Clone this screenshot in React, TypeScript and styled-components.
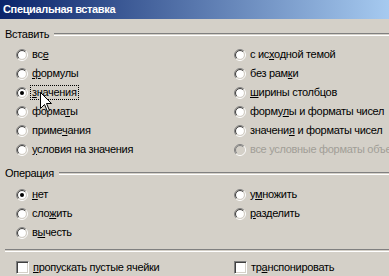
import React from "react";
import styled, { createGlobalStyle } from "styled-components";

const GlobalStyle = createGlobalStyle`
  html, body {
    margin: 0;
    padding: 0;
    background: #d4d0c8;
  }
`;

type Option = {
  text: string;
  hot: number;
  checked?: boolean;
  disabled?: boolean;
  focused?: boolean;
};

const pasteOptions: Option[] = [
  { text: "все", hot: 2 },
  { text: "формулы", hot: 0 },
  { text: "значения", hot: 0, checked: true, focused: true },
  { text: "форматы", hot: 5 },
  { text: "примечания", hot: 5 },
  { text: "условия на значения", hot: 0 },
  { text: "с исходной темой", hot: 4 },
  { text: "без рамки", hot: 7 },
  { text: "ширины столбцов", hot: 0 },
  { text: "формулы и форматы чисел", hot: 5 },
  { text: "значения и форматы чисел", hot: 7 },
  { text: "все условные форматы объединения", hot: -1, disabled: true },
];

const operationOptions: Option[] = [
  { text: "нет", hot: 0, checked: true },
  { text: "сложить", hot: 3 },
  { text: "вычесть", hot: 1 },
  { text: "умножить", hot: 1 },
  { text: "разделить", hot: 0 },
];

const Window = styled.div`
  position: relative;
  width: 389px;
  height: 276px;
  overflow: hidden;
  background: #d4d0c8;
  font-family: "Liberation Sans", Arial, sans-serif;
  font-size: 11px;
  letter-spacing: -0.3px;
  color: #000;
`;

const TitleBar = styled.div`
  height: 19px;
  padding-left: 3px;
  background: linear-gradient(90deg, #0a246a 0%, #a6caf0 100%);
  color: #fff;
  font-weight: bold;
  letter-spacing: -0.35px;
  line-height: 19px;
  white-space: nowrap;
`;

const Body = styled.div`
  display: flex;
  flex-direction: column;
  padding-left: 5px;
`;

const GroupHeader = styled.div<{ $top: number }>`
  display: flex;
  align-items: center;
  gap: 5px;
  height: 14px;
  margin-top: ${({ $top }) => $top}px;
  white-space: nowrap;
`;

const EtchedLine = styled.div`
  flex: 1;
  height: 1px;
  border-top: 1px solid #808080;
  border-bottom: 1px solid #ffffff;
`;

const Separator = styled(EtchedLine)`
  flex: none;
  margin-top: 7px;
`;

const OptionGrid = styled.div<{ $rows: number; $top: number }>`
  display: grid;
  grid-template-columns: 218px 1fr;
  grid-template-rows: repeat(${({ $rows }) => $rows}, 19px);
  grid-auto-flow: column;
  margin-top: ${({ $top }) => $top}px;
  padding-left: 11px;
`;

const CheckGrid = styled.div`
  display: grid;
  grid-template-columns: 218px 1fr;
  height: 19px;
  margin-top: 6px;
  padding-left: 11px;
`;

const Row = styled.div<{ $disabled?: boolean }>`
  display: flex;
  align-items: center;
  gap: 2px;
  white-space: nowrap;
  color: ${({ $disabled }) => ($disabled ? "#a19e97" : "#000")};
`;

const Label = styled.span<{ $focused?: boolean }>`
  padding: 0 1px;
  line-height: 13px;
  border: 1px ${({ $focused }) => ($focused ? "dotted #000" : "solid transparent")};
`;

const Hot = styled.span`
  text-decoration: underline;
`;

const CheckBox = styled.span`
  display: block;
  box-sizing: border-box;
  width: 13px;
  height: 13px;
  background: #fff;
  border: 1px solid;
  border-color: #808080 #ffffff #ffffff #808080;
  box-shadow: inset 1px 1px 0 #404040, inset -1px -1px 0 #d4d0c8;
`;

const Cursor = styled.svg`
  position: absolute;
  left: 40px;
  top: 92px;
`;

const arc = (r: number) => {
  const d = r * 0.7071;
  return {
    tl: `M ${6 - d} ${6 + d} A ${r} ${r} 0 0 1 ${6 + d} ${6 - d}`,
    br: `M ${6 + d} ${6 - d} A ${r} ${r} 0 0 1 ${6 - d} ${6 + d}`,
  };
};

const Radio = ({ checked, disabled }: { checked?: boolean; disabled?: boolean }) => {
  const outer = arc(5.5);
  const inner = arc(4.5);
  return (
    <svg width="12" height="12" viewBox="0 0 12 12">
      <circle cx="6" cy="6" r="4" fill={disabled ? "#d4d0c8" : "#fff"} />
      <path d={outer.tl} stroke="#808080" fill="none" />
      <path d={inner.tl} stroke={disabled ? "#808080" : "#404040"} fill="none" />
      <path d={outer.br} stroke="#fff" fill="none" />
      <path d={inner.br} stroke="#d4d0c8" fill="none" />
      {checked && <circle cx="6" cy="6" r="2" fill="#000" />}
    </svg>
  );
};

const Text = ({ text, hot }: { text: string; hot: number }) =>
  hot < 0 ? (
    <>{text}</>
  ) : (
    <>
      {text.slice(0, hot)}
      <Hot>{text[hot]}</Hot>
      {text.slice(hot + 1)}
    </>
  );

const RadioRow = ({ option }: { option: Option }) => (
  <Row $disabled={option.disabled}>
    <Radio checked={option.checked} disabled={option.disabled} />
    <Label $focused={option.focused}>
      <Text text={option.text} hot={option.hot} />
    </Label>
  </Row>
);

const CheckRow = ({ text, hot }: { text: string; hot: number }) => (
  <Row>
    <CheckBox />
    <Label>
      <Text text={text} hot={hot} />
    </Label>
  </Row>
);

const App = () => (
  <Window>
    <GlobalStyle />
    <TitleBar>Специальная вставка</TitleBar>
    <Body>
      <GroupHeader $top={8}>
        Вставить
        <EtchedLine />
      </GroupHeader>
      <OptionGrid $rows={6} $top={4}>
        {pasteOptions.map((o) => (
          <RadioRow key={o.text} option={o} />
        ))}
      </OptionGrid>
      <GroupHeader $top={7}>
        Операция
        <EtchedLine />
      </GroupHeader>
      <OptionGrid $rows={3} $top={5}>
        {operationOptions.map((o) => (
          <RadioRow key={o.text} option={o} />
        ))}
      </OptionGrid>
      <Separator />
      <CheckGrid>
        <CheckRow text="пропускать пустые ячейки" hot={0} />
        <CheckRow text="транспонировать" hot={2} />
      </CheckGrid>
    </Body>
    <Cursor width="13" height="20" viewBox="0 0 13 20">
      <path
        d="M0.5 0.5 L0.5 16.5 L4.5 12.5 L7.5 19.5 L9.5 18.5 L6.5 11.5 L11.5 11.5 Z"
        fill="#fff"
        stroke="#000"
        strokeLinejoin="miter"
      />
    </Cursor>
  </Window>
);

export default App;
